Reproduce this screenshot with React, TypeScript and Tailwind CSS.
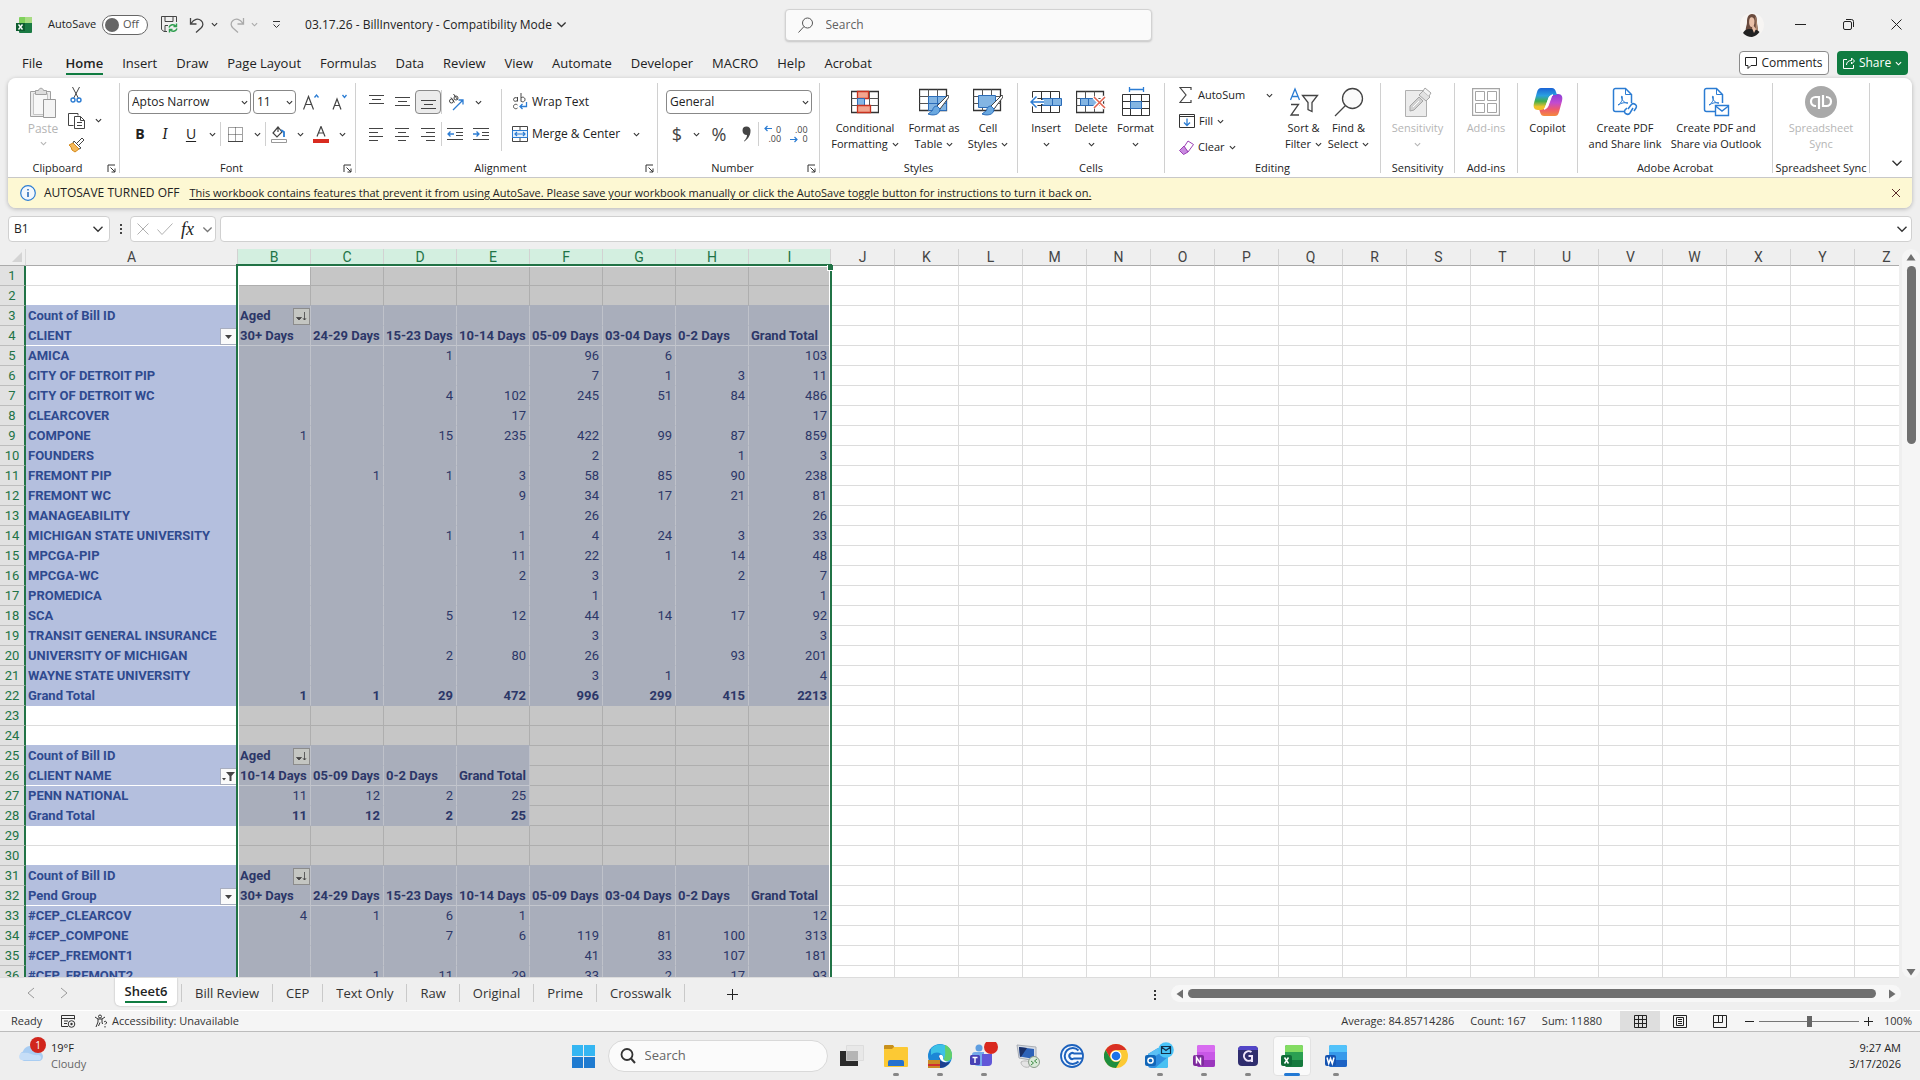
import type { ReactNode } from "react";
import { clsx } from "clsx";

/* ---------- data ---------- */

type Row = {
  label?: string;
  kind?: "title" | "heads" | "data" | "total";
  cells?: (string | number)[];
  filtered?: boolean;
  span?: number;
};

const AGES = ["30+ Days", "24-29 Days", "15-23 Days", "10-14 Days", "05-09 Days", "03-04 Days", "0-2 Days", "Grand Total"];

const ROWS: Row[] = [
  {},
  {},
  { kind: "title", label: "Count of Bill ID", cells: ["Aged"] },
  { kind: "heads", label: "CLIENT", cells: AGES },
  { kind: "data", label: "AMICA", cells: ["", "", 1, "", 96, 6, "", 103] },
  { kind: "data", label: "CITY OF DETROIT PIP", cells: ["", "", "", "", 7, 1, 3, 11] },
  { kind: "data", label: "CITY OF DETROIT WC", cells: ["", "", 4, 102, 245, 51, 84, 486] },
  { kind: "data", label: "CLEARCOVER", cells: ["", "", "", 17, "", "", "", 17] },
  { kind: "data", label: "COMPONE", cells: [1, "", 15, 235, 422, 99, 87, 859] },
  { kind: "data", label: "FOUNDERS", cells: ["", "", "", "", 2, "", 1, 3] },
  { kind: "data", label: "FREMONT PIP", cells: ["", 1, 1, 3, 58, 85, 90, 238] },
  { kind: "data", label: "FREMONT WC", cells: ["", "", "", 9, 34, 17, 21, 81] },
  { kind: "data", label: "MANAGEABILITY", cells: ["", "", "", "", 26, "", "", 26] },
  { kind: "data", label: "MICHIGAN STATE UNIVERSITY", cells: ["", "", 1, 1, 4, 24, 3, 33] },
  { kind: "data", label: "MPCGA-PIP", cells: ["", "", "", 11, 22, 1, 14, 48] },
  { kind: "data", label: "MPCGA-WC", cells: ["", "", "", 2, 3, "", 2, 7] },
  { kind: "data", label: "PROMEDICA", cells: ["", "", "", "", 1, "", "", 1] },
  { kind: "data", label: "SCA", cells: ["", "", 5, 12, 44, 14, 17, 92] },
  { kind: "data", label: "TRANSIT GENERAL INSURANCE", cells: ["", "", "", "", 3, "", "", 3] },
  { kind: "data", label: "UNIVERSITY OF MICHIGAN", cells: ["", "", 2, 80, 26, "", 93, 201] },
  { kind: "data", label: "WAYNE STATE UNIVERSITY", cells: ["", "", "", "", 3, 1, "", 4] },
  { kind: "total", label: "Grand Total", cells: [1, 1, 29, 472, 996, 299, 415, 2213] },
  {},
  {},
  { kind: "title", label: "Count of Bill ID", cells: ["Aged"], span: 4 },
  { kind: "heads", label: "CLIENT NAME", cells: ["10-14 Days", "05-09 Days", "0-2 Days", "Grand Total"], filtered: true, span: 4 },
  { kind: "data", label: "PENN NATIONAL", cells: [11, 12, 2, 25], span: 4 },
  { kind: "total", label: "Grand Total", cells: [11, 12, 2, 25], span: 4 },
  {},
  {},
  { kind: "title", label: "Count of Bill ID", cells: ["Aged"] },
  { kind: "heads", label: "Pend Group", cells: AGES },
  { kind: "data", label: "#CEP_CLEARCOV", cells: [4, 1, 6, 1, "", "", "", 12] },
  { kind: "data", label: "#CEP_COMPONE", cells: ["", "", 7, 6, 119, 81, 100, 313] },
  { kind: "data", label: "#CEP_FREMONT1", cells: ["", "", "", "", 41, 33, 107, 181] },
  { kind: "data", label: "#CEP_FREMONT2", cells: ["", 1, 11, 29, 33, 2, 17, 93] },
];

const COLS = "ABCDEFGHIJKLMNOPQRSTUVWXYZ".split("");
const TABS = ["File", "Home", "Insert", "Draw", "Page Layout", "Formulas", "Data", "Review", "View", "Automate", "Developer", "MACRO", "Help", "Acrobat"];
const SHEETS = ["Bill Review", "CEP", "Text Only", "Raw", "Original", "Prime", "Crosswalk"];

/* ---------- small pieces ---------- */

function Svg({ w, h = w, children, className }: { w: number; h?: number; children: ReactNode; className?: string }) {
  return (
    <svg width={w} height={h} viewBox={`0 0 ${w} ${h}`} fill="none" stroke="#444" className={clsx("shrink-0", className)} aria-hidden="true">
      {children}
    </svg>
  );
}

function Chevron({ color = "#333", size = 7 }: { color?: string; size?: number }) {
  return (
    <svg width={size} height={size} viewBox="0 0 8 8" fill="none" stroke={color} strokeWidth={size > 8 ? 0.9 : 1.3} className="shrink-0" aria-hidden="true">
      <path d="M1 2.500 4 5.500 7 2.500" />
    </svg>
  );
}

function IconButton({ label, className, children }: { label: string; className?: string; children: ReactNode }) {
  return (
    <button type="button" aria-label={label} className={clsx("flex h-6 shrink-0 items-center justify-center", className)}>
      {children}
    </button>
  );
}

function Divider({ className = "h-6" }: { className?: string }) {
  return <span className={clsx("w-px shrink-0 bg-[#d0d0d0]", className)} />;
}

function Group({ name, width, launcher, children }: { name: string; width: string; launcher?: boolean; children: ReactNode }) {
  return (
    <section aria-label={name || "Copilot"} className={clsx("flex h-[90px] shrink-0 flex-col border-r border-[#d0d0d0]", width)}>
      <div className="flex h-20">{children}</div>
      <div className="flex h-[10px] items-center">
        <span className="flex-1 text-center text-[11px] leading-4 whitespace-nowrap">{name}</span>
        {launcher && (
          <button type="button" aria-label={`${name} settings`} className="w-3">
            <Svg w={9}>
              <path d="M1 8V1h7M3.500 3.500 8 8M8 4.500V8H4.500" stroke="#333" />
            </Svg>
          </button>
        )}
      </div>
    </section>
  );
}

function BigButton({ icon, lines, width, drop, dropBelow, disabled }: { icon: ReactNode; lines: string[]; width: string; drop?: boolean; dropBelow?: boolean; disabled?: boolean }) {
  return (
    <button type="button" disabled={disabled} className={clsx("flex h-20 shrink-0 flex-col items-center text-[11px] leading-4 whitespace-nowrap", width, disabled && "text-[#b5b5b5]")}>
      <span className="flex h-[37px] items-center justify-center">{icon}</span>
      {lines.map((line, i) => (
        <span key={line} className="flex items-center gap-1">
          {line}
          {drop && i === lines.length - 1 && <Chevron />}
        </span>
      ))}
      {dropBelow && (
        <span className="flex h-4 items-center">
          <Chevron color={disabled ? "#b5b5b5" : "#333"} />
        </span>
      )}
    </button>
  );
}

function Combo({ label, value, width }: { label: string; value: string; width: string }) {
  return (
    <label className={clsx("relative flex h-6 shrink-0 items-center", width)}>
      <select aria-label={label} className="h-6 w-full appearance-none rounded-[4px] border border-[#888] bg-white pl-[3px] text-xs text-[#222]">
        <option>{value}</option>
      </select>
      <span className="pointer-events-none absolute right-[3px]">
        <Chevron />
      </span>
    </label>
  );
}

/* ---------- ribbon icons ---------- */

const PasteIcon = () => (
  <Svg w={28} h={31}>
    <path d="M1.500 4.500h20v25h-20z" fill="#ececec" stroke="#a0a0a0" />
    <path d="M4.500 6.500h14v21h-14z" fill="#f7f7f7" stroke="#c4c4c4" />
    <path d="M6.500 7.500v-4h3c.5-3 4.500-3 5 0h3v4z" fill="#ddd" stroke="#a0a0a0" />
    <path d="M14.500 12.500h12v18h-12z" fill="#f4f4f4" stroke="#999" />
  </Svg>
);

const CutIcon = () => (
  <Svg w={12} h={16}>
    <path d="M2.500 0 8.500 11.500M9.500 0 3.500 11.500" stroke="#444" />
    <circle cx="3" cy="13" r="2" stroke="#2b7cd3" strokeWidth="1.400" />
    <circle cx="9" cy="13" r="2" stroke="#2b7cd3" strokeWidth="1.400" />
  </Svg>
);

const CopyIcon = () => (
  <Svg w={17} h={17}>
    <path d="M10 3.500V1.500H.5v12h5" />
    <path d="M6.500 4.500h6l4 4v8h-10z" fill="#fff" />
    <path d="M12.500 4.500v4h4M9 10.500h5M9 13.500h5" />
  </Svg>
);

const BrushIcon = () => (
  <Svg w={17} h={16}>
    <path d="m9 6 5-5 2 2-5 5" fill="#fff" />
    <path d="m6 4 7 7-2 1-6-6z" fill="#fff" />
    <path d="M5 6 1 8l2 2 1 3 3 2 4-3z" fill="#f5b95a" stroke="#d48a1c" />
  </Svg>
);

const Lines = ({ rows }: { rows: [number, number][] }) => (
  <Svg w={15} h={16}>
    {rows.map(([x, len], i) => (
      <path key={i} d={`M${x} ${i * 4 + 2.5}h${len}`} />
    ))}
  </Svg>
);

const ThreeLines = ({ y }: { y: number }) => (
  <Svg w={15} h={16}>
    <path d={`M0 ${y}.5h15M3 ${y + 4}.5h9M0 ${y + 8}.5h15`} />
  </Svg>
);

const Indent = ({ out }: { out?: boolean }) => (
  <Svg w={16}>
    <path d="M0 2.500h16M9 6.500h7M9 9.500h7M0 13.500h16" />
    <path d={out ? "M7 8H1M3.500 5.500 1 8l2.500 2.500" : "M0 8h6M3.500 5.500 6 8l-2.500 2.500"} stroke="#2b7cd3" strokeWidth="1.300" />
  </Svg>
);

const GridBase = () => (
  <>
    <path d="M.5 1.500h27v21H.5z" fill="#fff" stroke="#333" strokeWidth="1.300" />
    <path d="M.5 8.500h27M.5 15.500h27M9.500 1.500v21M18.500 1.500v21" stroke="#555" />
  </>
);

const SmallBrush = () => (
  <>
    <path d="M29 7 18 18l3 3L30 9z" fill="#fff" stroke="#444" />
    <path d="M18 18c-3 0-4 2-4.500 4.500L9 26c5 2 12 1 12-5z" fill="#6aa8e0" stroke="#2b6cb8" />
  </>
);

const CondIcon = () => (
  <Svg w={28} h={24}>
    <GridBase />
    <path d="M6.500 1.500h11v7h-11z" fill="#f2a58e" stroke="#c8321f" strokeWidth="1.300" />
    <path d="M6.500 8.500h7v7h-7z" fill="#83b5e3" stroke="#2b6cb8" />
    <path d="M6.500 15.500h13v7h-13z" fill="#f2a58e" stroke="#c8321f" strokeWidth="1.300" />
  </Svg>
);

const FormatTableIcon = () => (
  <Svg w={30} h={28}>
    <GridBase />
    <path d="M9.500 8.500h18v14h-18z" fill="#83b5e3" stroke="#2b6cb8" />
    <path d="M18.500 8.500v14M9.500 15.500h18" stroke="#2b6cb8" />
    <SmallBrush />
  </Svg>
);

const CellStyleIcon = () => (
  <Svg w={30} h={28}>
    <GridBase />
    <path d="M5.500 7.500h17v12h-17z" fill="#83b5e3" stroke="#2b6cb8" />
    <SmallBrush />
  </Svg>
);

const InsertIcon = () => (
  <Svg w={32} h={24}>
    <path d="M2.500 1.500h27v21h-27zM2.500 8.500h27M2.500 15.500h27M11.500 1.500v21M20.500 1.500v21" fill="#fff" stroke="#333" />
    <path d="M12.500 8.500h19v7h-19z" fill="#83b5e3" stroke="#2b6cb8" />
    <path d="M22.500 8.500v7" stroke="#2b6cb8" />
    <path d="M14 12H1M6.500 6.500 1 12l5.500 5.500" stroke="#fff" strokeWidth="4" />
    <path d="M14 12H1M6.500 6.500 1 12l5.500 5.500" stroke="#2b7cd3" strokeWidth="1.500" />
  </Svg>
);

const DeleteIcon = () => (
  <Svg w={30} h={24}>
    <GridBase />
    <path d="M4.500 8.500h17v7h-17z" fill="#83b5e3" stroke="#2b6cb8" />
    <path d="M12.500 8.500v7" stroke="#2b6cb8" />
    <path d="m18 7 11 11M29 7 18 18" stroke="#fff" strokeWidth="4" />
    <path d="m18 7 11 11M29 7 18 18" stroke="#e0604c" strokeWidth="1.500" />
  </Svg>
);

const FormatIcon = () => (
  <Svg w={28} h={30}>
    <path d="M7 2.500h14M7.500 0v5M21.500 0v5" stroke="#2b7cd3" strokeWidth="1.300" />
    <path d="M.5 7.500h27v21H.5zM.5 14.500h27M.5 21.500h27M8.500 7.500v21M19.500 7.500v21" fill="#fff" stroke="#333" />
    <path d="M8.500 14.500h11v7h-11z" fill="#83b5e3" stroke="#2b6cb8" />
  </Svg>
);

const SortIcon = () => (
  <Svg w={30} h={30}>
    <path d="M1.500 13 6 2l4.500 11M3 9.500h6" stroke="#2b7cd3" strokeWidth="1.300" />
    <path d="M2 17.500h7.500L2 28h8" strokeWidth="1.300" />
    <path d="M13.500 8.500h15l-5.500 7v9l-4-2v-7z" fill="#fafafa" strokeWidth="1.300" />
  </Svg>
);

const FindIcon = () => (
  <Svg w={30} h={30}>
    <circle cx="18.500" cy="11.500" r="10" fill="#fafafa" strokeWidth="1.300" />
    <path d="M11.500 18.500 1 29" strokeWidth="1.300" />
  </Svg>
);

const SensitivityIcon = () => (
  <Svg w={28} h={32}>
    <path d="M1.500 4.500h21v26h-21z" fill="#ececec" stroke="#b0b0b0" />
    <path d="m6 20 9-9 4 4-9 9-4 1z" fill="#d2d2d2" stroke="#a5a5a5" />
    <path d="m9 21 6-6" stroke="#fff" />
    <path d="m15 9 4-4 7 6-4 4z" fill="#e2e2e2" stroke="#a5a5a5" />
    <path d="m19 5 2-3 6 5-2 3" fill="#f4f4f4" stroke="#a5a5a5" />
  </Svg>
);

const AddinsIcon = () => (
  <Svg w={28} h={28}>
    <path d="M.5.5h27v27H.5z" stroke="#a5a5a5" strokeWidth="1.400" />
    <path d="M3.500 3.500h9v9h-9zM15.500 3.500h9v9h-9zM3.500 15.500h9v9h-9zM15.500 15.500h9v9h-9z" stroke="#a5a5a5" />
  </Svg>
);

const CopilotIcon = () => (
  <Svg w={30} h={28}>
    <defs>
      <linearGradient id="cpA" x1="0" y1="0" x2="0" y2="1">
        <stop offset="0" stopColor="#1b63d6" />
        <stop offset=".35" stopColor="#2aa0e0" />
        <stop offset=".6" stopColor="#3fae4e" />
        <stop offset=".85" stopColor="#f0c32c" />
      </linearGradient>
      <linearGradient id="cpB" x1="0" y1="0" x2="0" y2="1">
        <stop offset="0" stopColor="#8a3fd6" />
        <stop offset=".4" stopColor="#c24bd0" />
        <stop offset=".7" stopColor="#ee5a6e" />
        <stop offset="1" stopColor="#f58a3c" />
      </linearGradient>
    </defs>
    <path d="M22 28H11c-2 0-3-1-4-4l-1-3h4c3 0 4-1 5-4l3-8c1-2 2-3 4-3h3c4 0 5 3 4 7l-3 11c-1 3-2 4-4 4z" fill="url(#cpB)" stroke="none" />
    <path d="M8 0h11c2 0 3 1 4 4l1 3h-4c-3 0-4 1-5 4l-3 8c-1 2-2 3-4 3H5c-4 0-5-3-4-7L4 4c1-3 2-4 4-4z" fill="url(#cpA)" stroke="none" />
    <path d="M16 10c1-2 2-3 4-3h-1l-4 11c-1 2-2 3-4 3h1z" fill="#fff" stroke="#fff" />
  </Svg>
);

const PdfIcon = ({ mail }: { mail?: boolean }) => (
  <Svg w={27} h={30}>
    <path d="M12 24.500H3.500a2 2 0 0 1-2-2v-19a2 2 0 0 1 2-2h10l6 6V16" stroke="#2b7cd3" strokeWidth="1.500" />
    <path d="M13.500 1.500v6h6" stroke="#2b7cd3" />
    <path d="M6 18c4-2 5-7 4-9-2 0 1 8 6 7-3-1-7 0-10 2z" stroke="#2b7cd3" />
    {mail ? (
      <>
        <path d="M12.500 18.500h13v10h-13z" fill="#fff" stroke="#2b7cd3" strokeWidth="1.400" />
        <path d="m12.500 19 6.500 5 6.500-5" stroke="#2b7cd3" strokeWidth="1.400" />
      </>
    ) : (
      <>
        <path d="m16 22 3-4c2-3 7 0 5 3l-2 3" stroke="#2b7cd3" strokeWidth="1.500" />
        <path d="m21 21-3 5c-2 3-7 0-5-3l2-2" stroke="#2b7cd3" strokeWidth="1.500" />
      </>
    )}
  </Svg>
);

const QbIcon = () => (
  <Svg w={32}>
    <circle cx="16" cy="16" r="16" fill="#a9a9a9" stroke="none" />
    <path d="M14 23V11h-3.500a4.500 4.500 0 0 0 0 9H11M18 9v11h3.500a4.500 4.500 0 0 0 0-9H21" stroke="#fff" strokeWidth="2.200" />
  </Svg>
);

/* ---------- app chrome ---------- */

function TitleBar() {
  return (
    <header className="flex h-[47px] shrink-0 items-center pt-[2px] text-xs text-[#222]">
      <div className="flex flex-1 items-center pl-4">
        <Svg w={16}>
          <path d="M4 0h11a1 1 0 0 1 1 1v5H3V1a1 1 0 0 1 1-1z" fill="#7fd15c" stroke="none" />
          <path d="M9 0h6a1 1 0 0 1 1 1v5H9z" fill="#a9dc84" stroke="none" />
          <path d="M3 6h13v9a1 1 0 0 1-1 1H4a1 1 0 0 1-1-1z" fill="#1a7a43" stroke="none" />
          <path d="M0 6h9v8H0z" fill="#0e5c30" stroke="none" />
          <path d="m2.500 7.500 4 5M6.500 7.500l-4 5" stroke="#fff" strokeWidth="1.400" />
        </Svg>
        <span className="ml-4 text-[11px]">AutoSave</span>
        <button type="button" role="switch" aria-checked="false" aria-label="AutoSave" className="ml-[6px] flex h-5 w-[46px] items-center gap-1 rounded-full border border-[#666] bg-white pl-[2px] text-[11px] text-[#555]">
          <span className="size-[14px] rounded-full bg-[#666]" />
          Off
        </button>
        <IconButton label="Save" className="ml-3 w-[18px]">
          <Svg w={17}>
            <path d="M6 15.500H3l-2.500-2V.5h15V6M4 .5v5h8v-5M4 15V9.500h3" />
            <path d="M8 11.500c1-3 5-4 7-1M16 12.500c-1 3-5 4-7 1" stroke="#2f9e4f" strokeWidth="1.400" />
            <path d="M15.500 7.500v3h-3M8.500 16.500v-3h3" stroke="#2f9e4f" strokeWidth="1.400" />
          </Svg>
        </IconButton>
        <IconButton label="Undo" className="ml-[11px] w-4">
          <Svg w={16}>
            <path d="M1.500 1v6h6M2 6.500C5 2 9 1 12 3.500S14 9 12 11l-5 4.500" strokeWidth="1.300" />
          </Svg>
        </IconButton>
        <IconButton label="Undo list" className="w-[18px]">
          <Chevron />
        </IconButton>
        <IconButton label="Redo" className="ml-[6px] w-4">
          <Svg w={16}>
            <path d="M14.500 1v6h-6M14 6.500C11 2 7 1 4 3.500S2 9 4 11l5 4.500" stroke="#aaa" strokeWidth="1.300" />
          </Svg>
        </IconButton>
        <IconButton label="Redo list" className="w-[18px]">
          <Chevron color="#aaa" />
        </IconButton>
        <IconButton label="Customize Quick Access Toolbar" className="ml-1 w-[18px]">
          <Svg w={9}>
            <path d="M1 1.500h7M1.500 4.500l3 3 3-3" stroke="#333" />
          </Svg>
        </IconButton>
        <button type="button" className="ml-5 flex items-center gap-1 text-xs whitespace-nowrap">
          03.17.26 - BillInventory - Compatibility Mode
          <Chevron size={11} />
        </button>
      </div>
      <label className="flex h-8 w-[367px] items-center rounded-[4px] border border-[#d2d2d2] bg-[#fafafa] px-3 shadow-[0_1px_2px_rgba(0,0,0,0.18)]">
        <Svg w={16}>
          <circle cx="9.500" cy="6" r="5" stroke="#555" />
          <path d="M6 9.500.5 15.500" stroke="#555" />
        </Svg>
        <input aria-label="Search" placeholder="Search" className="ml-3 w-full bg-transparent text-xs outline-none placeholder:text-[#616161]" />
      </label>
      <div className="flex flex-1 items-center justify-end">
        <button type="button" aria-label="Account" className="mr-3">
          <Svg w={24}>
            <circle cx="12" cy="12" r="12" fill="#f7f5f3" stroke="none" />
            <path d="M12 1C8 1 7 5 7 9s-2 6-1 10l11 1c2-3 0-7 0-11 0-5-1-8-5-8z" fill="#6a4b3e" stroke="none" />
            <path d="M9.500 6c1-3 5-2 5 2s-1 6-3 6-3-4-2-8z" fill="#e9c0a8" stroke="none" />
            <path d="M15 3c2 3 2 10 3 15l-3 1c1-5 1-11 0-16z" fill="#b08a70" stroke="none" />
            <path d="M3 20c2-4 5-4 8-4 4 0 7 1 8.500 3A12 12 0 0 1 12 24a12 12 0 0 1-9-4z" fill="#222" stroke="none" />
            <path d="m13 12 3 4-2 4-2-5z" fill="#e9c0a8" stroke="none" />
          </Svg>
        </button>
        <IconButton label="Minimize" className="w-12">
          <Svg w={11}>
            <path d="M0 5.500h11" stroke="#222" />
          </Svg>
        </IconButton>
        <IconButton label="Restore" className="w-12">
          <Svg w={11}>
            <rect x=".5" y="2.500" width="8" height="8" rx="1.500" stroke="#222" />
            <path d="M3 .5h5.500a2 2 0 0 1 2 2V8" stroke="#222" />
          </Svg>
        </IconButton>
        <IconButton label="Close" className="w-12">
          <Svg w={11}>
            <path d="m.5.5 10 10M10.500.5l-10 10" stroke="#222" />
          </Svg>
        </IconButton>
      </div>
    </header>
  );
}

function TabBar() {
  return (
    <nav className="flex h-[31px] shrink-0 items-start justify-between pt-1 pr-3 pl-[22px] text-xs text-[#222]">
      <div className="flex gap-[19px] text-[13px]">
        {TABS.map((tab) => (
          <button
            key={tab}
            type="button"
            className={clsx("h-6 leading-[25px] whitespace-nowrap", tab === "File" && "mr-1", tab === "Home" && "border-b-2 border-[#107c41] font-semibold")}
          >
            {tab}
          </button>
        ))}
      </div>
      <div className="flex gap-2">
        <button type="button" className="flex h-6 w-[90px] items-center justify-center gap-1 rounded-[4px] border border-[#8a8a8a] bg-white">
          <Svg w={12}>
            <path d="M.5.5h11v8H6l-3 3v-3H.5z" stroke="#222" />
          </Svg>
          Comments
        </button>
        <button type="button" className="flex h-6 w-[71px] items-center justify-center gap-1 rounded-[4px] bg-[#107c41] text-white">
          <Svg w={12}>
            <path d="M4 2.500H.5v9h10V8M3.500 8c0-3 2-4.500 5-4.500V1L11.500 4 8.500 7V5" stroke="#fff" />
          </Svg>
          Share
          <Chevron color="#fff" />
        </button>
      </div>
    </nav>
  );
}

function Ribbon() {
  return (
    <div className="flex h-[99px] items-start bg-white pt-[5px] text-[#222]">
      <Group name="Clipboard" width="w-28" launcher>
        <button type="button" disabled className="ml-[19px] flex w-8 flex-col items-center text-xs text-[#b5b5b5]">
          <span className="mt-1">
            <PasteIcon />
          </span>
          <span className="leading-[22px]">Paste</span>
          <Chevron color="#b5b5b5" />
        </button>
        <div className="ml-[5px] flex flex-col gap-[1px]">
          <IconButton label="Cut" className="w-6">
            <CutIcon />
          </IconButton>
          <span className="flex">
            <IconButton label="Copy" className="w-6">
              <CopyIcon />
            </IconButton>
            <IconButton label="Copy options" className="w-5">
              <Chevron />
            </IconButton>
          </span>
          <IconButton label="Format Painter" className="w-6">
            <BrushIcon />
          </IconButton>
        </div>
      </Group>

      <Group name="Font" width="w-[236px]" launcher>
        <div className="flex flex-col gap-2 pt-[7px] pl-2">
          <div className="flex gap-[2px]">
            <Combo label="Font" value="Aptos Narrow" width="w-[123px]" />
            <Combo label="Font size" value="11" width="w-[43px]" />
            <IconButton label="Increase font size" className="w-[26px]">
              <Svg w={16} h={18}>
                <path d="M.5 16.500 5.500 3.500l5 13M2.500 11.500h6" strokeWidth="1.200" />
                <path d="M11.500 4.500 13.500 2l2 2.500" stroke="#2b7cd3" strokeWidth="1.300" />
              </Svg>
            </IconButton>
            <IconButton label="Decrease font size" className="w-[26px]">
              <Svg w={15} h={18}>
                <path d="M1 16.500 5 6l4 10.500M2.500 12.500h5" strokeWidth="1.200" />
                <path d="m10.500 2 2 2.500 2-2.500" stroke="#2b7cd3" strokeWidth="1.300" />
              </Svg>
            </IconButton>
          </div>
          <div className="flex items-center">
            <IconButton label="Bold" className="w-6 text-sm font-bold">
              B
            </IconButton>
            <IconButton label="Italic" className="w-[26px] font-serif text-base italic">
              I
            </IconButton>
            <IconButton label="Underline" className="w-[26px] text-sm underline underline-offset-2">
              U
            </IconButton>
            <IconButton label="Underline options" className="w-4">
              <Chevron />
            </IconButton>
            <Divider />
            <IconButton label="Borders" className="w-7">
              <Svg w={15}>
                <path d="M.5.5h14v14H.5zM7.500.5v14M.5 7.500h14" strokeDasharray="1 1" />
                <path d="M0 14.500h15" />
              </Svg>
            </IconButton>
            <IconButton label="Border options" className="w-4">
              <Chevron />
            </IconButton>
            <Divider />
            <IconButton label="Fill color" className="w-[26px]">
              <Svg w={16} h={17}>
                <path d="m7 1-5 6 4 4 5-5zM7 1v5" strokeWidth="1.200" />
                <path d="m10 4 3 2v5" stroke="#2b7cd3" strokeWidth="1.800" />
                <path d="M.5 13.500h15v3H.5z" fill="#fff" stroke="#999" />
              </Svg>
            </IconButton>
            <IconButton label="Fill options" className="w-4">
              <Chevron />
            </IconButton>
            <IconButton label="Font color" className="w-[26px]">
              <Svg w={16} h={17}>
                <path d="m4 10.500 4-10 4 10M5.500 7h5" strokeWidth="1.200" />
                <path d="M0 13h16v4H0z" fill="#d92b20" stroke="none" />
              </Svg>
            </IconButton>
            <IconButton label="Font color options" className="w-4">
              <Chevron />
            </IconButton>
          </div>
        </div>
      </Group>

      <Group name="Alignment" width="w-[302px]" launcher>
        <div className="flex flex-col gap-2 pt-[7px] pl-[7px]">
          <div className="flex items-center">
            <IconButton label="Top align" className="w-[26px]">
              <ThreeLines y={1} />
            </IconButton>
            <IconButton label="Middle align" className="w-[26px]">
              <ThreeLines y={3} />
            </IconButton>
            <IconButton label="Bottom align" className="w-[26px] rounded-[4px] border border-[#888] bg-[#ebebeb]">
              <ThreeLines y={6} />
            </IconButton>
            <Divider />
            <IconButton label="Orientation" className="w-7">
              <Svg w={17}>
                <circle cx="3.500" cy="7" r="2" />
                <path d="m3 3.500 3.500 5" />
                <circle cx="8" cy="4" r="2" />
                <path d="m5.500 0 4 5.500" />
                <path d="M5 16 15 6M10.500 6H15v4.500" stroke="#2b7cd3" strokeWidth="1.300" />
              </Svg>
            </IconButton>
            <IconButton label="Orientation options" className="w-4">
              <Chevron />
            </IconButton>
          </div>
          <div className="flex items-center">
            <IconButton label="Align left" className="w-[26px]">
              <Lines rows={[[0, 14], [0, 9], [0, 14], [0, 9]]} />
            </IconButton>
            <IconButton label="Center" className="w-[26px]">
              <Lines rows={[[0, 14], [3, 8], [0, 14], [3, 8]]} />
            </IconButton>
            <IconButton label="Align right" className="w-[26px]">
              <Lines rows={[[0, 14], [5, 9], [0, 14], [5, 9]]} />
            </IconButton>
            <Divider />
            <IconButton label="Decrease indent" className="w-[26px]">
              <Indent out />
            </IconButton>
            <IconButton label="Increase indent" className="w-[26px]">
              <Indent />
            </IconButton>
          </div>
        </div>
        <div className="flex pt-[6px] pl-[7px]">
          <Divider className="h-[62px]" />
          <div className="flex flex-col gap-2 pt-px pl-[10px] text-xs">
            <button type="button" className="flex h-6 items-center gap-1 whitespace-nowrap">
              <Svg w={16} h={18}>
                <path d="M5.500 4v4.500M5.500 5.500c-1-1.500-4-1-4 1s3 2.500 4 .5M9 0v8.500M9 5c1-1.500 4-1 4 1.500S10 9.500 9 8M5.500 12c-1.500-1.500-4-.5-4 1.500s2.500 3 4 1.500" />
                <path d="M14.500 9v4.500H8M10.500 11 8 13.500l2.500 2.500" stroke="#2b7cd3" strokeWidth="1.300" />
              </Svg>
              Wrap Text
            </button>
            <div className="flex">
              <button type="button" className="flex h-6 items-center gap-1 whitespace-nowrap">
                <Svg w={16}>
                  <path d="M.5.5h15v15H.5zM8 .5V4M8 12v3.500" />
                  <path d="M.5 4.500h15v7H.5z" fill="#e6f1fb" stroke="#2b7cd3" />
                  <path d="M3 8h10M5 6 3 8l2 2M11 6l2 2-2 2" stroke="#2b7cd3" strokeWidth="1.200" />
                </Svg>
                Merge &amp; Center
              </button>
              <IconButton label="Merge options" className="ml-1 w-6">
                <Chevron />
              </IconButton>
            </div>
          </div>
        </div>
      </Group>

      <Group name="Number" width="w-[162px]" launcher>
        <div className="flex flex-col gap-2 pt-[7px] pl-2">
          <Combo label="Number format" value="General" width="w-[146px]" />
          <div className="flex items-center text-[#444]">
            <IconButton label="Accounting format" className="w-[22px] text-lg">
              $
            </IconButton>
            <IconButton label="Accounting options" className="w-4">
              <Chevron />
            </IconButton>
            <IconButton label="Percent" className="w-[30px] text-lg">
              %
            </IconButton>
            <IconButton label="Comma style" className="w-6">
              <Svg w={9} h={16}>
                <path d="M4.500.5a4 4 0 0 1 4 4.500c0 5-3 8-6 10.500L2 15c2-2 3-4 3-6-3 0-4.500-2-4.500-4.500a4 4 0 0 1 4-4z" fill="#444" stroke="none" />
              </Svg>
            </IconButton>
            <Divider />
            <IconButton label="Increase decimal" className="w-[27px] text-[9px] leading-[9px]">
              <span className="relative flex flex-col text-right">
                <span className="pl-3">0</span>
                <span>.00</span>
                <Svg w={8} h={7} className="absolute top-0 left-0">
                  <path d="M8 3.500H1M3.500 1 1 3.500 3.500 6" stroke="#2b7cd3" strokeWidth="1.200" />
                </Svg>
              </span>
            </IconButton>
            <IconButton label="Decrease decimal" className="w-[26px] text-[9px] leading-[9px]">
              <span className="relative flex flex-col text-right">
                <span>.00</span>
                <span className="pl-3">0</span>
                <Svg w={8} h={7} className="absolute bottom-0 left-0">
                  <path d="M0 3.500h7M4.500 1 7 3.500 4.500 6" stroke="#2b7cd3" strokeWidth="1.200" />
                </Svg>
              </span>
            </IconButton>
          </div>
        </div>
      </Group>

      <Group name="Styles" width="w-[198px]">
        <BigButton icon={<CondIcon />} lines={["Conditional", "Formatting"]} width="ml-2 w-[74px]" drop />
        <BigButton icon={<FormatTableIcon />} lines={["Format as", "Table"]} width="w-16" drop />
        <BigButton icon={<CellStyleIcon />} lines={["Cell", "Styles"]} width="w-[44px]" drop />
      </Group>

      <Group name="Cells" width="w-[147px]">
        <BigButton icon={<InsertIcon />} lines={["Insert"]} width="ml-1 w-12" dropBelow />
        <BigButton icon={<DeleteIcon />} lines={["Delete"]} width="w-[42px]" dropBelow />
        <BigButton icon={<FormatIcon />} lines={["Format"]} width="w-[47px]" dropBelow />
      </Group>

      <Group name="Editing" width="w-[216px]">
        <div className="flex w-[112px] flex-col gap-[2px] pl-[14px] text-[11px]">
          <div className="flex h-6 items-center justify-between">
            <button type="button" className="flex items-center gap-[6px]">
              <Svg w={13} h={16}>
                <path d="M12 3V.5H1L7 8l-6 7.500h11V13" strokeWidth="1.200" />
              </Svg>
              AutoSum
            </button>
            <IconButton label="AutoSum options" className="w-4">
              <Chevron />
            </IconButton>
          </div>
          <button type="button" className="flex h-6 items-center gap-1">
            <Svg w={16} h={14}>
              <path d="M.5.5h15v13H.5zM.5 2.500h15" stroke="#333" />
              <path d="M8 4.500v7M5 8.500l3 3 3-3" stroke="#2b7cd3" strokeWidth="1.300" />
            </Svg>
            Fill
            <Chevron />
          </button>
          <button type="button" className="flex h-6 items-center gap-1">
            <Svg w={15} h={15}>
              <path d="m5 7 4-6 5.500 3.500L9 12z" fill="#fff" stroke="#9b3fb5" />
              <path d="m5 6-4.500 4.500 4 4L9 12z" fill="#c98be0" stroke="#9b3fb5" />
            </Svg>
            Clear
            <Chevron />
          </button>
        </div>
        <BigButton icon={<SortIcon />} lines={["Sort &", "Filter"]} width="ml-1 w-[45px]" drop />
        <BigButton icon={<FindIcon />} lines={["Find &", "Select"]} width="w-[45px]" drop />
      </Group>

      <Group name="Sensitivity" width="w-[74px]">
        <BigButton icon={<SensitivityIcon />} lines={["Sensitivity"]} width="w-full" dropBelow disabled />
      </Group>
      <Group name="Add-ins" width="w-[63px]">
        <BigButton icon={<AddinsIcon />} lines={["Add-ins"]} width="w-full" disabled />
      </Group>
      <Group name="" width="w-[60px]">
        <BigButton icon={<CopilotIcon />} lines={["Copilot"]} width="w-full" />
      </Group>
      <Group name="Adobe Acrobat" width="w-[195px]">
        <BigButton icon={<PdfIcon />} lines={["Create PDF", "and Share link"]} width="ml-1 w-[86px]" />
        <BigButton icon={<PdfIcon mail />} lines={["Create PDF and", "Share via Outlook"]} width="w-[96px]" />
      </Group>
      <Group name="Spreadsheet Sync" width="w-[97px]">
        <BigButton icon={<QbIcon />} lines={["Spreadsheet", "Sync"]} width="w-full" disabled />
      </Group>
      <div className="flex h-[90px] flex-1 items-end justify-end pr-[9px] pb-1">
        <button type="button" aria-label="Collapse ribbon">
          <Chevron size={12} />
        </button>
      </div>
    </div>
  );
}

function Notice() {
  return (
    <div role="status" className="flex h-[31px] items-center border-t border-[#c8c8c8] bg-[#fdf8d3] pr-[11px] pl-3 text-[11px] text-[#222]">
      <Svg w={16}>
        <circle cx="8" cy="8" r="7.300" stroke="#2b7cd3" strokeWidth="1.200" fill="#f3f8fd" />
        <path d="M8 7v5M8 4v1.500" stroke="#2b6cb8" strokeWidth="1.600" />
      </Svg>
      <span className="ml-2 text-xs whitespace-nowrap">AUTOSAVE TURNED OFF</span>
      <a href="#autosave" className="ml-[10px] flex-1 whitespace-nowrap underline underline-offset-2">
        This workbook contains features that prevent it from using AutoSave. Please save your workbook manually or click the AutoSave toggle button for instructions to turn it back on.
      </a>
      <button type="button" aria-label="Dismiss">
        <Svg w={10}>
          <path d="m1 1 8 8M9 1 1 9" stroke="#5a2a2a" />
        </Svg>
      </button>
    </div>
  );
}

function FormulaBar() {
  return (
    <div className="flex h-[26px] shrink-0 px-2">
      <label className="flex w-[102px] items-center rounded-[4px] border border-[#d0d0d0] bg-white px-[5px]">
        <input aria-label="Name Box" defaultValue="B1" className="w-full min-w-0 bg-transparent text-xs text-[#222] outline-none" />
        <Chevron size={12} />
      </label>
      <Svg w={20} h={26}>
        <path d="M10 8h2v2h-2zM10 12h2v2h-2zM10 16h2v2h-2z" fill="#444" stroke="none" />
      </Svg>
      <div className="flex w-[86px] items-center justify-between rounded-[4px] border border-[#d0d0d0] bg-white pr-[2px] pl-[6px]">
        <IconButton label="Cancel">
          <Svg w={12}>
            <path d="m.5.5 11 11M11.500.5l-11 11" stroke="#b0b0b0" />
          </Svg>
        </IconButton>
        <IconButton label="Enter">
          <Svg w={16} h={12}>
            <path d="m.5 6.500 4.500 5L15.500.5" stroke="#b0b0b0" />
          </Svg>
        </IconButton>
        <IconButton label="Insert function" className="font-['Liberation_Serif',serif] text-lg text-[#222] italic">
          fx
        </IconButton>
        <Chevron size={11} color="#777" />
      </div>
      <label className="ml-1 flex flex-1 items-center rounded-[4px] border border-[#d0d0d0] bg-white pr-[3px] pl-1">
        <input aria-label="Formula" className="w-full bg-transparent text-xs outline-none" />
        <Chevron size={12} />
      </label>
    </div>
  );
}

/* ---------- sheet ---------- */

function FilterButton({ kind }: { kind: "drop" | "filter" | "sort" }) {
  return (
    <button
      type="button"
      aria-label={kind === "sort" ? "Sort ages" : "Filter rows"}
      className={clsx(
        "absolute top-[2px] right-0 flex size-[17px] items-center justify-center border",
        kind === "sort" ? "border-[#8c8c8c] bg-[#c4c6c2]" : "border-[#a8aebf] bg-[#fafafa]",
      )}
    >
      <Svg w={13} h={11}>
        {kind === "drop" && <path d="M3 4h7L6.500 8z" fill="#444" stroke="none" />}
        {kind === "sort" && <path d="M1.500 6.500h5L4 9zM9.500 1v8M8 7.500l1.500 1.500 1.500-1.500" fill="#444" stroke="#444" strokeWidth=".8" />}
        {kind === "filter" && <path d="M0 7h4L2 9.500zM4 1h9L9.500 5v5h-2V5z" fill="#444" stroke="none" />}
      </Svg>
    </button>
  );
}

function SheetRow({ row, number }: { row: Row; number: number }) {
  const { kind, label, cells = [], span = 8, filtered } = row;
  const next = ROWS[number];
  const joined = !!kind || !!next?.kind;
  return (
    <tr className="h-5">
      <th scope="row" className="h-5 border-r-2 border-b border-r-[#217346] border-b-[#bdbdbd] bg-[#e1e1e1] p-0 text-center font-normal text-[#217346]">
        {number}
      </th>
      <td
        className={clsx(
          "relative border-r border-b border-r-white p-0 pl-[2px] font-bold whitespace-nowrap text-[#2f4a8f]",
          kind ? "bg-[#b4bfde]" : "bg-white",
          kind === "heads" ? "border-b-white" : joined ? "border-b-[#b4bfde]" : "border-b-[#dcdcdc]",
        )}
      >
        {label}
        {kind === "heads" && <FilterButton kind={filtered ? "filter" : "drop"} />}
      </td>
      {COLS.slice(1).map((col, i) => {
        const inPivot = !!kind && i < span;
        const belowPivot = !!next?.kind && i < (next.span ?? 8);
        const selected = i < 8;
        const value = cells[i] ?? "";
        const text = kind === "title" || kind === "heads";
        return (
          <td
            key={col}
            className={clsx(
              "relative border-r border-b p-0 whitespace-nowrap",
              text ? "pl-[2px] text-left" : "pr-[3px] text-right",
              (text || kind === "total") && "font-bold",
              selected ? "text-[#2c3768]" : "border-[#dcdcdc] bg-white",
              selected && inPivot && "border-r-[#bfc2ca] bg-[#a9aebb]",
              selected && !inPivot && "border-r-[#aeaeae]",
              selected && !inPivot && (number === 1 && i === 0 ? "bg-white" : "bg-[#c6c6c6]"),
              selected && (inPivot && kind === "heads" ? "border-b-[#c3c6cd]" : inPivot || belowPivot ? "border-b-[#a9aebb]" : "border-b-[#aeaeae]"),
            )}
          >
            {value !== "" && <span className="relative z-10">{value}</span>}
            {kind === "title" && i === 0 && <FilterButton kind="sort" />}
          </td>
        );
      })}
    </tr>
  );
}

function Sheet() {
  return (
    <div className="flex min-h-0 flex-1 pt-[7px]">
      <div className="relative min-w-0 flex-1 overflow-hidden border-b border-[#dcdcdc]">
        <table className="w-px table-fixed border-separate border-spacing-0 font-['Roboto','Liberation_Sans',sans-serif] text-[13px] leading-[19px]">
          <colgroup>
            <col className="w-[26px]" />
            <col className="w-[212px]" />
            {COLS.slice(1).map((col, i) => (
              <col key={col} className={i < 7 ? "w-[73px]" : i === 7 ? "w-[82px]" : "w-16"} />
            ))}
          </colgroup>
          <thead>
            <tr>
              <th aria-label="Select all" className="h-[17px] border-r border-b border-r-[#d8d8d8] border-b-[#ababab] p-0">
                <Svg w={12} h={11} className="ml-3">
                  <path d="M10 0v10H0z" fill="#d4d4d4" stroke="none" />
                </Svg>
              </th>
              {COLS.map((col, i) => (
                <th
                  key={col}
                  scope="col"
                  className={clsx(
                    "h-[17px] border-r border-b border-r-[#d2d2d2] border-b-[#ababab] p-0 text-sm leading-4 font-normal",
                    i > 0 && i < 9 ? "bg-[#d3efe0] text-[#217346]" : "text-[#444]",
                  )}
                >
                  {col}
                </th>
              ))}
            </tr>
          </thead>
          <tbody>
            {ROWS.map((row, i) => (
              <SheetRow key={i} row={row} number={i + 1} />
            ))}
          </tbody>
        </table>
        {/* selection frame with its fill handle, B:I */}
        <div className="pointer-events-none absolute top-[15px] -bottom-px left-[236px] w-[596px] border-2 border-b-0 border-[#217346]">
          <div className="h-full border border-b-0 border-white" />
          <span className="absolute -top-px -right-[3px] size-[6px] border-b border-l border-white bg-[#217346]" />
        </div>
      </div>
      <div className="ml-[3px] flex w-[18px] shrink-0 flex-col items-center rounded-full bg-[#f5f5f5] pt-1 pb-[2px]">
        <Svg w={10} h={8}>
          <path d="M5 1 9.500 7.500h-9z" fill="#6f6f6f" stroke="none" />
        </Svg>
        <span className="mt-[5px] h-[178px] w-[9px] rounded-full bg-[#707070]" />
        <Svg w={10} h={8} className="mt-auto">
          <path d="M5 7.500 9.500 1h-9z" fill="#6f6f6f" stroke="none" />
        </Svg>
      </div>
    </div>
  );
}

function SheetTabs() {
  return (
    <div className="flex h-8 shrink-0 items-start text-[13px] text-[#333]">
      <div className="flex w-[115px] items-center pt-[9px] pl-[26px]">
        <button type="button" aria-label="Previous sheet" className="w-[33px]">
          <Svg w={10} h={12}>
            <path d="M8 1 2 6l6 5" stroke="#999" />
          </Svg>
        </button>
        <button type="button" aria-label="Next sheet">
          <Svg w={10} h={12}>
            <path d="m2 1 6 5-6 5" stroke="#999" />
          </Svg>
        </button>
      </div>
      <button type="button" className="flex h-7 w-[62px] justify-center rounded-b-[5px] bg-white shadow-[0_0_2px_rgba(0,0,0,0.3)]">
        <span className="h-[25px] border-b-2 border-[#107c41] text-[13px] leading-[26px] font-semibold text-[#222]">Sheet6</span>
      </button>
      <div className="ml-1 flex pt-[6px]">
        {SHEETS.map((name, i) => (
          <button key={name} type="button" className={clsx("h-[18px] border-r border-[#c9c9c9] px-[13px] leading-[18px] whitespace-nowrap", i === 0 && "border-l")}>
            {name}
          </button>
        ))}
      </div>
      <IconButton label="New sheet" className="mt-1 ml-[42px]">
        <Svg w={11}>
          <path d="M5.500 0v11M0 5.500h11" stroke="#222" />
        </Svg>
      </IconButton>
      <div className="flex flex-1 justify-end pt-[7px] pr-[19px]">
        <Svg w={4} h={17}>
          <path d="M1 5h2v2H1zM1 9h2v2H1zM1 13h2v2H1z" fill="#333" stroke="none" />
        </Svg>
        <div className="ml-[14px] flex h-[17px] w-[38%] min-w-[730px] items-center rounded-full bg-[#f7f7f7] px-[5px]">
          <Svg w={8} h={10}>
            <path d="M7 .5v9L.5 5z" fill="#6f6f6f" stroke="none" />
          </Svg>
          <span className="mr-3 ml-1 h-[9px] flex-1 rounded-full bg-[#707070]" />
          <Svg w={8} h={10}>
            <path d="M1 .5v9L7.500 5z" fill="#6f6f6f" stroke="none" />
          </Svg>
        </div>
      </div>
    </div>
  );
}

function StatusBar() {
  return (
    <footer className="flex h-[22px] shrink-0 items-center border-t border-b border-t-white border-b-[#bcbcbc] bg-[#f5f5f5] text-[11px] text-[#333]">
      <span className="w-[51px] pl-[11px]">Ready</span>
      <button type="button" aria-label="Record macro" className="ml-[10px]">
        <Svg w={15} h={13}>
          <path d="M7 11.500H.5V.5h13v4M.5 3.500h13M3 6h4M3 8.500h3" stroke="#333" />
          <circle cx="10.500" cy="9" r="3.300" stroke="#333" />
          <circle cx="10.500" cy="9" r="1.200" fill="#333" stroke="none" />
        </Svg>
      </button>
      <button type="button" className="ml-[18px] flex items-center gap-1">
        <Svg w={14} h={14}>
          <circle cx="6" cy="2.500" r="1.500" stroke="#333" />
          <path d="m1 3 3 2v3l-2 5M11 3 8 5v3l.5 2M4 5h4M4.500 12 6 8.500" stroke="#333" />
          <path d="M10 8c1-1.500 3-.5 2.500 1L11 10.500M11 12v1.500" stroke="#333" />
        </Svg>
        Accessibility: Unavailable
      </button>
      <div className="ml-auto flex h-full items-center">
        <span className="mr-4">Average: 84.85714286</span>
        <span className="mr-4">Count: 167</span>
        <span className="mr-[18px]">Sum: 11880</span>
        <button type="button" aria-label="Normal view" className="flex h-full w-10 items-center justify-center bg-[#dedede]">
          <Svg w={13}>
            <path d="M.5.5h12v12H.5zM4.500.5v12M8.500.5v12M.5 4.500h12M.5 8.500h12" stroke="#222" />
          </Svg>
        </button>
        <button type="button" aria-label="Page layout view" className="flex h-full w-10 items-center justify-center">
          <Svg w={14} h={13}>
            <path d="M.5.5h13v12H.5zM3.500 2.500h7v8h-7zM5 4.500h4M5 6.500h4M5 8.500h4" stroke="#222" />
          </Svg>
        </button>
        <button type="button" aria-label="Page break view" className="flex h-full w-10 items-center justify-center">
          <Svg w={14} h={13}>
            <path d="M.5.5h13v12H.5zM.5 7.500h9v-7M5.500.5v7" stroke="#222" />
          </Svg>
        </button>
        <IconButton label="Zoom out" className="ml-[5px]">
          <Svg w={9}>
            <path d="M0 4.500h9" stroke="#222" />
          </Svg>
        </IconButton>
        <input
          type="range"
          aria-label="Zoom"
          defaultValue={50}
          className="mx-[5px] h-3 w-[100px] appearance-none bg-[linear-gradient(#777,#777)] bg-[length:100%_1px] bg-center bg-no-repeat [&::-webkit-slider-thumb]:h-[11px] [&::-webkit-slider-thumb]:w-[5px] [&::-webkit-slider-thumb]:appearance-none [&::-webkit-slider-thumb]:bg-[#666]"
        />
        <IconButton label="Zoom in">
          <Svg w={9}>
            <path d="M0 4.500h9M4.500 0v9" stroke="#222" />
          </Svg>
        </IconButton>
        <span className="w-[47px] pr-2 text-right">100%</span>
      </div>
    </footer>
  );
}

/* ---------- Windows taskbar ---------- */

function OfficeTile({ light, mid, dark, badge, letter }: { light: string; mid: string; dark: string; badge: string; letter: ReactNode }) {
  return (
    <Svg w={22} h={24}>
      <rect x="4" y="1" width="18" height="22" rx="2" fill={mid} stroke="none" />
      <path d="M6 1h14a2 2 0 0 1 2 2v5H4V3a2 2 0 0 1 2-2z" fill={light} stroke="none" />
      <path d="M4 16h18v5a2 2 0 0 1-2 2H6a2 2 0 0 1-2-2z" fill={dark} stroke="none" />
      <rect x="0" y="11" width="11" height="11" rx="2" fill={badge} stroke="none" />
      <g stroke="#fff" strokeWidth="1.500">{letter}</g>
    </Svg>
  );
}

const APPS: { name: string; running?: boolean; active?: boolean; icon: ReactNode }[] = [
  {
    name: "Task View",
    icon: (
      <Svg w={24}>
        <path d="M0 7h18v15H0z" fill="#2b2b2b" stroke="none" />
        <path d="M6.500 1.500h17v15h-17z" fill="#e8e8e8" stroke="#ddd" />
        <path d="M6.500 7H18v9.500H6.500z" fill="#b5b5b5" stroke="none" />
      </Svg>
    ),
  },
  {
    name: "File Explorer",
    running: true,
    icon: (
      <Svg w={24}>
        <path d="M0 2a1 1 0 0 1 1-1h8l2 3h-1v4H0z" fill="#c8901c" stroke="none" />
        <path d="M0 5h8l2-2h13a1 1 0 0 1 1 1v18a1 1 0 0 1-1 1H1a1 1 0 0 1-1-1z" fill="#fcc934" stroke="none" />
        <path d="M4 22v-4a2 2 0 0 1 2-2h12a2 2 0 0 1 2 2v4z" fill="#2471cf" stroke="none" />
      </Svg>
    ),
  },
  {
    name: "Edge",
    running: true,
    icon: (
      <Svg w={24}>
        <circle cx="12" cy="12" r="12" fill="#1c87d6" stroke="none" />
        <path d="M3 5C9-3 24 0 24 12c0 4-3 6-7 5-3-1-1-3-2-5-2-4-8-5-12-1z" fill="#3cc1e6" stroke="none" />
        <path d="M17 1c7 2 9 12 5 15-3 2-7 1-6-1 2-4 1-8 1-14z" fill="#62cf6a" stroke="none" />
        <path d="M12 11c-3 3 0 9 10 7-3 5-8 6-11 6z" fill="#1e3f8f" stroke="none" />
        <path d="M11 12c2-3 5 0 4 3 1 2 4 3 6 2-4 3-9 0-10-5z" fill="#fff" stroke="none" />
        <path d="M0 16h12v8H0z" fill="#c98a24" stroke="none" />
        <path d="M0 20h12v2H0z" fill="#cf2f2f" stroke="none" />
      </Svg>
    ),
  },
  {
    name: "Teams",
    running: true,
    icon: (
      <Svg w={28} h={28}>
        <circle cx="9" cy="6" r="3.500" fill="#5f9ee0" stroke="none" />
        <path d="M2 13a3 3 0 0 1 3-3h9v14H8a6 6 0 0 1-6-6z" fill="#74a9ea" stroke="none" />
        <path d="M12 12h10v8a4 4 0 0 1-4 4h-6z" fill="#6157d8" stroke="none" />
        <rect x="0" y="13" width="10" height="10" rx="1.500" fill="#4741b5" stroke="none" />
        <path d="M2.500 15.500h5M5 15.500V21" stroke="#fff" strokeWidth="1.400" />
        <circle cx="21" cy="5" r="7" fill="#d9281e" stroke="none" />
      </Svg>
    ),
  },
  {
    name: "Remote Desktop",
    icon: (
      <Svg w={24}>
        <path d="m1 1 19 2v14L3 14z" fill="#d7dce4" stroke="#a8adb5" />
        <path d="m3 3 15 2v10L4 12.500z" fill="#2d62b8" stroke="none" />
        <path d="m3 3 8 1-6 9-1-.5z" fill="#1b2f66" stroke="none" />
        <path d="M5 18c3-2 8-1 9 1l-1 4c-4 1-8-1-8-5z" fill="#e4e4e4" stroke="#b8b8b8" />
        <circle cx="18" cy="18" r="5.500" fill="#d9ead8" stroke="#8a9a8a" />
        <path d="m15 17 2.500 2-2.500 2M21 15l-2.500 2 2.500 2" stroke="#3b8a42" />
      </Svg>
    ),
  },
  {
    name: "CompIQ",
    icon: (
      <Svg w={24}>
        <circle cx="12" cy="12" r="11" fill="#f4f9ff" stroke="#1d62bd" strokeWidth="1.800" />
        <path d="M18.500 6.500A8 8 0 1 0 18.500 17.500" stroke="#1d62bd" strokeWidth="2" />
        <path d="M22.500 9.500H14a3 3 0 1 0 0 5h8.500" stroke="#1d62bd" strokeWidth="2" />
      </Svg>
    ),
  },
  {
    name: "Chrome",
    icon: (
      <Svg w={24}>
        <circle cx="12" cy="12" r="12" fill="#fcc934" stroke="none" />
        <path d="M1.600 6A12 12 0 0 1 22.400 6H12a6 6 0 0 0-5.200 9z" fill="#d93025" stroke="none" />
        <path d="M1.600 6a12 12 0 0 0 10.400 18l5.200-9a6 6 0 0 1-10.400 0z" fill="#1e8e3e" stroke="none" />
        <circle cx="12" cy="12" r="5.500" fill="#fff" stroke="none" />
        <circle cx="12" cy="12" r="4.300" fill="#1a73e8" stroke="none" />
      </Svg>
    ),
  },
  {
    name: "Outlook",
    running: true,
    icon: (
      <Svg w={29} h={28}>
        <path d="M3 12 13 6l10 6v12a2 2 0 0 1-2 2H6a3 3 0 0 1-3-3z" fill="#2f8fe0" stroke="none" />
        <path d="m3 12 10-6 5 3-12 8z" fill="#5cc0f5" stroke="none" />
        <path d="M10 26 23 15v9a2 2 0 0 1-2 2H10z" fill="#48c0f2" stroke="none" />
        <rect x="0" y="13" width="11" height="11" rx="2" fill="#1166b8" stroke="none" />
        <circle cx="5.500" cy="18.500" r="2.600" stroke="#fff" strokeWidth="1.500" />
        <circle cx="21" cy="8" r="7.800" fill="#4ac3f7" stroke="none" />
        <path d="M16.500 4.500h9v7h-9zM16.500 5l4.500 3.500L25.500 5" stroke="#14304a" strokeWidth="1.200" />
      </Svg>
    ),
  },
  {
    name: "OneNote",
    running: true,
    icon: <OfficeTile light="#d86cf0" mid="#c857e6" dark="#9a36bd" badge="#7d2a9c" letter={<path d="M3.500 19.500v-6l4 6v-6" />} />,
  },
  {
    name: "Genesys",
    running: true,
    icon: (
      <Svg w={20}>
        <rect width="20" height="20" rx="4" fill="#2f2d6e" stroke="none" />
        <path d="M0 4a4 4 0 0 1 4-4h12a4 4 0 0 1 4 4z" fill="#5346c8" stroke="none" />
        <path d="M13.500 6A4.800 4.800 0 1 0 14 13.500V10h-3.500M14 13v3" stroke="#f0e6fb" strokeWidth="2" />
      </Svg>
    ),
  },
  {
    name: "Excel",
    running: true,
    active: true,
    icon: <OfficeTile light="#84dc63" mid="#2ba052" dark="#167a3e" badge="#0f6b37" letter={<path d="m3.500 13.500 4 6M7.500 13.500l-4 6" />} />,
  },
  {
    name: "Word",
    running: true,
    icon: <OfficeTile light="#52c2fa" mid="#3799ea" dark="#1c62c4" badge="#1553b0" letter={<path d="m2 13.500 1.700 6 1.800-5 1.800 5 1.700-6" />} />,
  },
];

function Taskbar() {
  return (
    <div className="flex h-12 shrink-0 bg-[#eee] text-[11px] text-[#222]">
      <div className="flex flex-1 items-start pt-2 pl-[18px]">
        <button type="button" className="flex text-left leading-4">
          <span className="relative mt-[5px] flex w-[33px]">
            <Svg w={25} h={17}>
              <path d="M6 16a5 5 0 0 1-1-9.500C6 3 9 1 13 1c4 0 7 2 7 6 3 0 5 2 5 4.500S23 16 21 16z" fill="#a9cdf2" stroke="none" />
              <path d="M3 15c-4-3-1-8 3-7 5-1 9 3 14 2 3 0 4 3 2 5z" fill="#c6def7" stroke="none" />
            </Svg>
            <span className="absolute -top-2 left-3 flex size-4 items-center justify-center rounded-full bg-[#d1261d] text-[10px] text-white">1</span>
          </span>
          <span>
            19°F
            <span className="block text-[#666]">Cloudy</span>
          </span>
        </button>
      </div>
      <div className="flex shrink-0 items-center">
        <button type="button" aria-label="Start" className="flex w-11 justify-center">
          <Svg w={23}>
            <path d="M0 0h11v11H0zM12 0h11v11H12z" fill="#35b6f2" stroke="none" />
            <path d="M0 12h11v11H0zM12 12h11v11H12z" fill="#1f7bd0" stroke="none" />
          </Svg>
        </button>
        <label className="mx-[2px] flex h-8 w-[220px] items-center rounded-full border border-[#d9d9d9] bg-[#fbfbfb] pl-[11px]">
          <Svg w={16}>
            <circle cx="7" cy="6.500" r="5.500" stroke="#333" strokeWidth="1.800" />
            <path d="m11 10.500 4 4.500" stroke="#333" strokeWidth="2" />
          </Svg>
          <input aria-label="Taskbar search" placeholder="Search" className="ml-[9px] w-40 bg-transparent text-[13px] outline-none placeholder:text-[#666]" />
        </label>
        {APPS.map((app) => (
          <button key={app.name} type="button" aria-label={app.name} className="relative flex h-12 w-11 items-center justify-center">
            {app.active && <span className="absolute inset-x-[3px] inset-y-1 rounded-[4px] border border-[#e2e2e2] bg-[#fafafa]" />}
            <span className="relative flex size-7 items-center justify-center">{app.icon}</span>
            {app.running && <span className={clsx("absolute bottom-1 h-[3px] rounded-full", app.active ? "w-4 bg-[#2379d4]" : "w-[6px] bg-[#868686]")} />}
          </button>
        ))}
      </div>
      <div className="flex-1 pt-2 pr-[19px] text-right leading-4">
        <div>9:27 AM</div>
        <div>3/17/2026</div>
      </div>
    </div>
  );
}

export default function App() {
  return (
    <div className="flex h-screen flex-col overflow-hidden bg-[#efefef] font-['Open_Sans','Noto_Sans',sans-serif]">
      <TitleBar />
      <TabBar />
      <div className="mx-2 mb-2 shrink-0 overflow-hidden rounded-[8px] shadow-[0_1px_4px_rgba(0,0,0,0.25)]">
        <Ribbon />
        <Notice />
      </div>
      <FormulaBar />
      <Sheet />
      <SheetTabs />
      <StatusBar />
      <Taskbar />
    </div>
  );
}
